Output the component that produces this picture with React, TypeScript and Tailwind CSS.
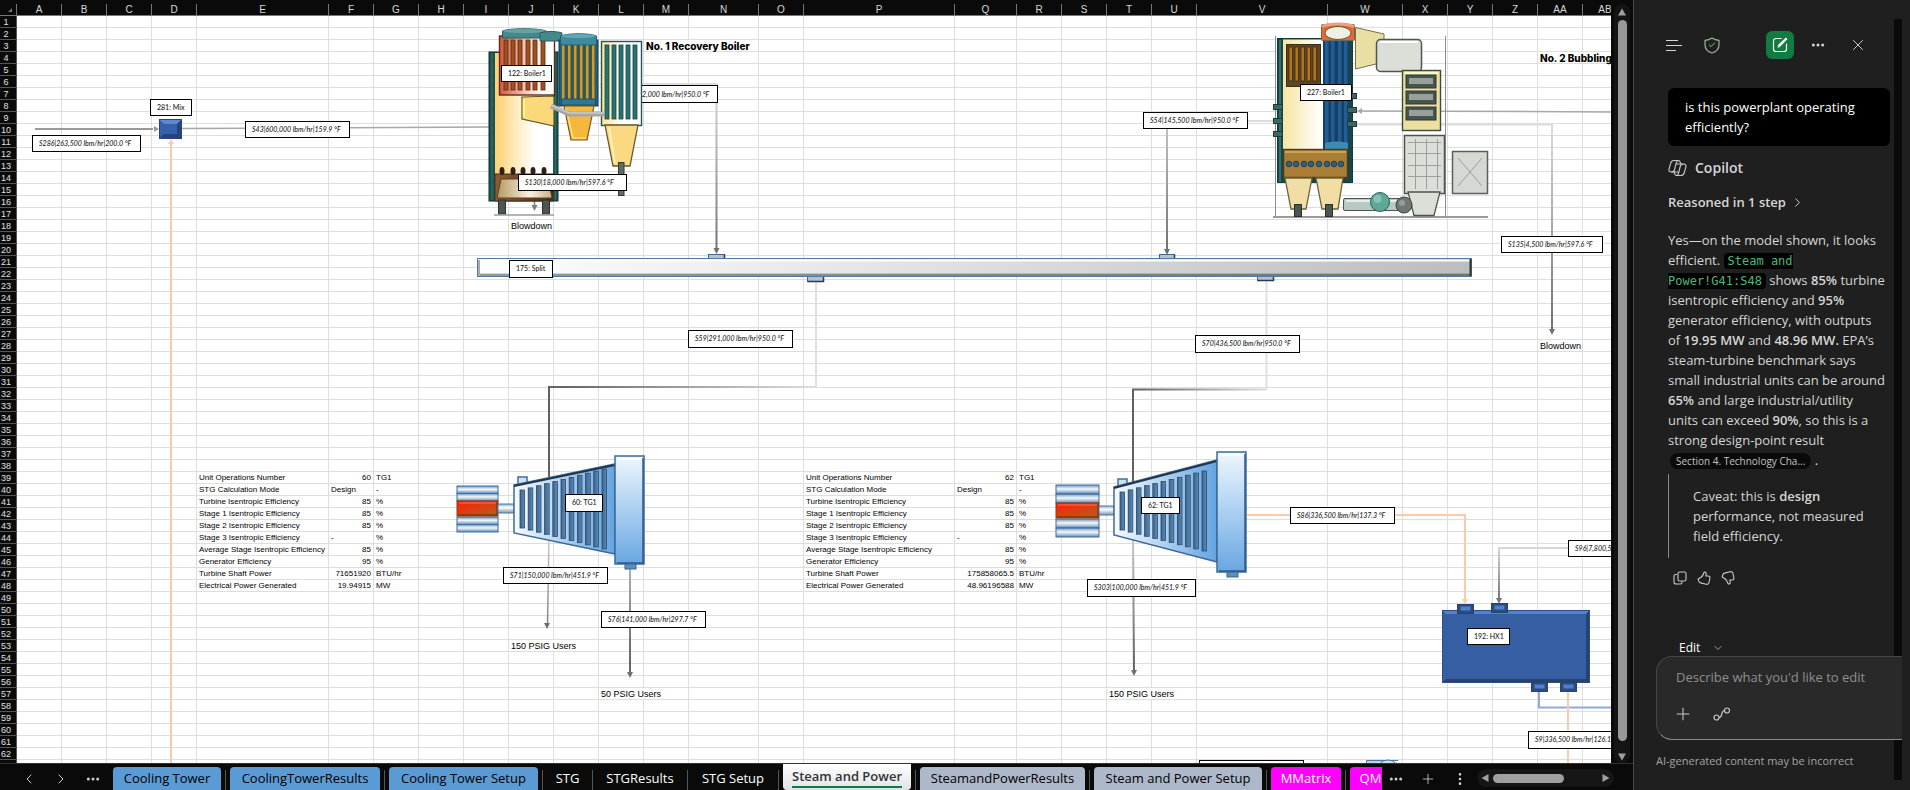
import { Fragment } from "react";
import { Check, ChevronDown, ChevronLeft, ChevronRight, Ellipsis, EllipsisVertical, Plus, X } from "lucide-react";

interface Column {
  name: string;
  width: number;
}

interface Cell {
  text: string;
  span?: number;
  className?: string;
}

interface Label {
  text: string;
  x: number;
  y: number;
  w: number;
  h?: number;
  stream?: boolean;
}

const columns: Column[] = [
  { name: "A", width: 45 },
  { name: "B", width: 45 },
  { name: "C", width: 45 },
  { name: "D", width: 45 },
  { name: "E", width: 132 },
  { name: "F", width: 45 },
  { name: "G", width: 45 },
  { name: "H", width: 45 },
  { name: "I", width: 45 },
  { name: "J", width: 45 },
  { name: "K", width: 45 },
  { name: "L", width: 45 },
  { name: "M", width: 45 },
  { name: "N", width: 70 },
  { name: "O", width: 45 },
  { name: "P", width: 151 },
  { name: "Q", width: 62 },
  { name: "R", width: 45 },
  { name: "S", width: 45 },
  { name: "T", width: 45 },
  { name: "U", width: 45 },
  { name: "V", width: 131 },
  { name: "W", width: 75 },
  { name: "X", width: 45 },
  { name: "Y", width: 45 },
  { name: "Z", width: 45 },
  { name: "AA", width: 45 },
  { name: "AB", width: 45 },
];

const note = "text-[9px]";
const heading = "text-[10px] font-extrabold font-['Inter',sans-serif]";
const right = "text-right";

const cells: Record<string, Cell> = {
  M3: { text: "No. 1 Recovery Boiler", span: 2, className: heading },
  AA4: { text: "No. 2 Bubbling", span: 2, className: heading },
  J18: { text: "Blowdown", className: note },
  AA28: { text: "Blowdown", className: note },
  J53: { text: "150 PSIG Users", span: 2, className: note },
  L57: { text: "50 PSIG Users", span: 2, className: note },
  T57: { text: "150 PSIG Users", span: 2, className: note },
};

// name, first unit, second unit, unit of measure
const results: [string, string, string, string][] = [
  ["Unit Operations Number", "60", "62", "TG1"],
  ["STG Calculation Mode", "Design", "Design", "-"],
  ["Turbine Isentropic Efficiency", "85", "85", "%"],
  ["Stage 1 Isentropic Efficiency", "85", "85", "%"],
  ["Stage 2 Isentropic Efficiency", "85", "85", "%"],
  ["Stage 3 Isentropic Efficiency", "-", "-", "%"],
  ["Average Stage Isentropic Efficiency", "85", "85", "%"],
  ["Generator Efficiency", "95", "95", "%"],
  ["Turbine Shaft Power", "71651920", "175858065.5", "BTU/hr"],
  ["Electrical Power Generated", "19.94915", "48.96196588", "MW"],
];

results.forEach(([name, first, second, unit], i) => {
  const row = 39 + i;
  const align = /^\d/.test(first) ? right : "";
  cells[`E${row}`] = { text: name };
  cells[`F${row}`] = { text: first, className: align };
  cells[`G${row}`] = { text: unit };
  cells[`P${row}`] = { text: name };
  cells[`Q${row}`] = { text: second, className: align };
  cells[`R${row}`] = { text: unit };
});

const labels: Label[] = [
  { text: "281: Mix", x: 150, y: 99, w: 42 },
  { text: "S286|263,500 lbm/hr|200.0 °F", x: 32, y: 135, w: 109, stream: true },
  { text: "S43|600,000 lbm/hr|159.9 °F", x: 245, y: 121, w: 105, stream: true },
  { text: "122: Boiler1", x: 501, y: 65, w: 51 },
  { text: "S130|18,000 lbm/hr|597.6 °F", x: 518, y: 174, w: 109, stream: true },
  { text: "175: Split", x: 509, y: 260, w: 44, h: 18 },
  { text: "S54|145,500 lbm/hr|950.0 °F", x: 1143, y: 112, w: 105, stream: true },
  { text: "227: Boiler1", x: 1300, y: 84, w: 52 },
  { text: "S135|4,500 lbm/hr|597.6 °F", x: 1501, y: 236, w: 102, stream: true },
  { text: "S59|291,000 lbm/hr|950.0 °F", x: 688, y: 330, w: 105, h: 18, stream: true },
  { text: "S70|436,500 lbm/hr|950.0 °F", x: 1195, y: 335, w: 105, h: 18, stream: true },
  { text: "S71|150,000 lbm/hr|451.9 °F", x: 503, y: 567, w: 105, stream: true },
  { text: "S76|141,000 lbm/hr|297.7 °F", x: 601, y: 611, w: 105, stream: true },
  { text: "60: TG1", x: 565, y: 494, w: 38, h: 18 },
  { text: "62: TG1", x: 1141, y: 497, w: 39 },
  { text: "S303|100,000 lbm/hr|451.9 °F", x: 1087, y: 579, w: 109, h: 18, stream: true },
  { text: "S86|336,500 lbm/hr|137.3 °F", x: 1290, y: 507, w: 105, stream: true },
  { text: "S96|7,800,5", x: 1568, y: 540, w: 105, stream: true },
  { text: "192: HX1", x: 1467, y: 628, w: 43 },
  { text: "S9|336,500 lbm/hr|126.1", x: 1528, y: 731, w: 105, h: 18, stream: true },
];

const plain = "bg-transparent text-white";
const blue = "bg-[#5b9bd5] text-black";
const slate = "bg-[#adb9ca] text-black";
const magenta = "bg-[#ff00ff] text-white";

const tabs = [
  { name: "Cooling Tower", className: `w-[108px] ${blue}` },
  { name: "CoolingTowerResults", className: `w-[150px] ${blue}` },
  { name: "Cooling Tower Setup", className: `w-[149px] ${blue}` },
  { name: "STG", className: `w-[41px] ${plain}` },
  { name: "STGResults", className: `w-[86px] ${plain}` },
  { name: "STG Setup", className: `w-[82px] ${plain}` },
  { name: "Steam and Power", className: "w-[128px]", active: true },
  { name: "SteamandPowerResults", className: `w-[165px] ${slate}` },
  { name: "Steam and Power Setup", className: `w-[168px] ${slate}` },
  { name: "MMatrix", className: `w-[70px] ${magenta}` },
  { name: "QM", className: `w-[32px] rounded-r-none pl-[9px] ${magenta}` },
];

function Grid() {
  const rows = Array.from({ length: 63 }, (_, i) => i + 1);

  return (
    <table className="w-[1628px] table-fixed border-separate border-spacing-0 bg-white text-[8px] leading-[10px] text-black">
      <colgroup>
        <col className="w-[17px]" />
        {columns.map((c) => (
          <col key={c.name} style={{ width: c.width }} />
        ))}
      </colgroup>
      <thead>
        <tr className="bg-[#0a0a0a] text-[10px] text-[#d8d8d8]">
          <th className="h-[12px] border-r border-b border-[#777] p-0">
            <svg className="mr-1 ml-auto size-[4px]" viewBox="0 0 4 4">
              <path d="M4 0V4H0Z" fill="#777" />
            </svg>
          </th>
          {columns.map((c) => (
            <th key={c.name} scope="col" className="h-[12px] border-r border-b border-[#777] p-0 pt-px font-normal">
              {c.name}
            </th>
          ))}
        </tr>
      </thead>
      <tbody>
        {rows.map((row) => {
          let skip = 0;
          return (
            <tr key={row}>
              <th
                scope="row"
                className="h-[12px] border-r border-b border-[#555] bg-[#0a0a0a] p-0 pt-px pr-1 text-center text-[9px] font-normal text-[#e0e0e0]"
              >
                {row}
              </th>
              {columns.map((c) => {
                if (skip > 0) {
                  skip--;
                  return null;
                }
                const cell = cells[`${c.name}${row}`];
                skip = (cell?.span ?? 1) - 1;
                return (
                  <td
                    key={c.name}
                    colSpan={cell?.span}
                    className={`h-[12px] border-r border-b border-[#dedede] px-[2px] pt-px pb-0 whitespace-nowrap ${cell?.className ?? ""}`}
                  >
                    {cell?.text}
                  </td>
                );
              })}
            </tr>
          );
        })}
      </tbody>
    </table>
  );
}

function Port({ x, y, w = 16, h = 9 }: { x: number; y: number; w?: number; h?: number }) {
  return (
    <g>
      <rect x={x} y={y} width={w} height={h} fill="#2b4a80" stroke="#25456f" />
      <rect x={x + 3} y={y + 2} width={w - 6} height={h - 5} fill="#4f7fd0" />
    </g>
  );
}

function Nozzle({ x, y, w = 16, h = 5 }: { x: number; y: number; w?: number; h?: number }) {
  return (
    <g>
      <rect x={x} y={y} width={w} height={h} fill="#b4c3d3" stroke="#41668e" />
      <path d={`M${x + w} ${y}v${h}h${-w}`} fill="none" stroke="#26394f" strokeWidth="1.5" />
    </g>
  );
}

interface TurbineProps {
  x: number;
  top: number;
  bottom: number;
  genX: number;
  genW: number;
  coneW: number;
}

// x is where the cone starts, top and bottom are the casing's edges
function Turbine({ x, top, bottom, genX, genW, coneW }: TurbineProps) {
  const mid = (top + bottom) / 2 - 1;
  const wide = (bottom - top) / 2 - 9;
  const slots = Array.from({ length: 11 }, (_, i) => i);
  const half = genW > 42 ? 26 : 23;
  const band = (half - 8) / 2;
  return (
    <g>
      {[mid - half, mid - half + band, mid + 8, mid + 8 + band].map((y) => (
        <rect key={y} x={genX} y={y} width={genW} height={band} fill="url(#genBand)" stroke="#3f6d9c" />
      ))}
      <rect x={genX} y={mid - 8} width={genW} height="15" fill="url(#hot)" stroke="#8b3a12" />
      <path d={`M${genX + 2} ${mid - 6}h${genW - 4}`} stroke="#ff5a3a" strokeWidth="1.5" />
      <path d={`M${genX + genW - 1} ${mid - 7}v13h${2 - genW}`} stroke="#7d3a10" strokeWidth="1.5" />
      <rect x={genX + genW} y={mid - 5} width={x - genX - genW} height="9" fill="url(#pipe)" stroke="#4a78a8" />
      <rect x={x + 4} y={mid - 32} width="9" height="9" fill="#cfe2f5" stroke="#3f6d9c" strokeWidth="1.5" />
      <path
        d={`M${x} ${mid - 24}L${x + coneW} ${mid - wide}V${mid + wide}L${x} ${mid + 24}Z`}
        fill="url(#cone)"
        stroke="#3d6a99"
        strokeWidth="1.5"
      />
      <path d={`M${x} ${mid - 23}L${x + coneW} ${mid - wide + 1}`} stroke="#23364c" strokeWidth="2" />
      {slots.map((i) => {
        const h = 19 + i * 2.1;
        return (
          <rect
            key={i}
            x={x + 6 + i * 8.2}
            y={mid - h}
            width="4.6"
            height={h * 2}
            fill="url(#slot)"
            stroke="#2c4a6b"
            strokeWidth="0.8"
          />
        );
      })}
      <rect x={x + coneW} y={top} width="29" height={bottom - top} fill="url(#casing)" stroke="#3d6a99" strokeWidth="1.5" />
      <path d={`M${x + coneW + 3} ${top + 3}h23`} stroke="#fff" strokeWidth="2" />
      <path d={`M${x + coneW + 28} ${top + 2}v${bottom - top - 3}h-26`} fill="none" stroke="#2f5a8a" strokeWidth="1.5" />
      <rect x={x + coneW + 10} y={bottom} width="11" height="5" fill="#5c8fc0" stroke="#3a6390" />
    </g>
  );
}

function RecoveryBoiler() {
  return (
    <g>
      {/* furnace */}
      <rect x="489" y="52" width="69" height="149" fill="#1d5351" stroke="#10302f" />
      <path d="M492 53V200M555.500 53V200" stroke="#2a6a68" strokeWidth="1.5" />
      <rect x="495" y="53" width="58" height="121" fill="url(#flame)" />
      <rect x="495" y="174" width="58" height="27" fill="url(#ash)" stroke="#4a2c14" />
      <path d="M501 179H548L552 198H497Z" fill="url(#sand)" stroke="#5a4020" />
      {[502, 513, 523, 533, 544].map((x) => (
        <ellipse key={x} cx={x} cy="171" rx="2.5" ry="4" fill="#2f211a" />
      ))}
      <path d="M522 97L554 96V126L522 119Z" fill="#fbd97a" stroke="#5f5423" strokeWidth="1.2" />
      <path d="M524 99V117" stroke="#fff08a" strokeWidth="2.500" />
      {/* superheater */}
      <rect x="499.500" y="36" width="55" height="59" fill="url(#super)" stroke="#5c2a20" strokeWidth="1.4" />
      {[504, 511, 518, 526, 533, 541].map((x) => (
        <rect key={x} x={x} y="40" width="4" height="50" fill="#a1511f" stroke="#5b2b10" strokeWidth="0.8" />
      ))}
      <path d="M502.500 31C508 28 540 28 546 31V38H502.500Z" fill="#44898b" stroke="#2a5c5e" />
      <ellipse cx="524" cy="31" rx="21" ry="2" fill="#66a3a3" />
      <path d="M540 33C545 31 557 31 562 33V41H540Z" fill="#44898b" stroke="#2a5c5e" />
      {/* boiler bank */}
      <rect x="559" y="40" width="39" height="66" fill="#1e6280" stroke="#133f55" />
      <rect x="562" y="44" width="33" height="56" fill="#54532a" />
      {[562, 568, 574, 580, 586, 592].map((x) => (
        <rect key={x} x={x} y="44" width="2.500" height="56" fill="#d39a24" />
      ))}
      {[565, 571, 577, 583, 589].map((x) => (
        <rect key={x} x={x} y="44" width="2" height="56" fill="#1f5a78" />
      ))}
      <path d="M560.500 36C568 33 590 33 596.500 36V45H560.500Z" fill="#408aa0" stroke="#245d70" />
      <ellipse cx="578.500" cy="36" rx="17" ry="2" fill="#62a7b8" />
      <rect x="561.500" y="99" width="34" height="6" fill="#2f7890" stroke="#1c5266" />
      <path d="M564 106H594L587 140H571Z" fill="#f3b83c" stroke="#7b591e" strokeWidth="1.2" />
      <path d="M566 108L573 138H586" fill="none" stroke="#ffe07e" strokeWidth="1.5" />
      {/* precipitator */}
      <rect x="601.500" y="41.500" width="40" height="84" fill="url(#precip)" stroke="#23545a" strokeWidth="1.4" />
      {[605, 612, 619, 626, 633].map((x) => (
        <rect key={x} x={x} y="45" width="4" height="74" fill="#2a7370" stroke="#174746" strokeWidth="0.8" />
      ))}
      <path d="M605 125H638L630 166H613Z" fill="#fad980" stroke="#63582c" strokeWidth="1.3" />
      <path d="M609 127L615 163" stroke="#fff0b4" strokeWidth="2" />
      <rect x="618.500" y="162.500" width="5.500" height="33" fill="#616b63" stroke="#333a35" />
      <path d="M551 106L569 114H604" fill="none" stroke="#a5a5a5" strokeWidth="5" />
      <path d="M551 105L569 113H604" fill="none" stroke="#cdcdcd" strokeWidth="1.5" />
      {/* feet */}
      <rect x="498.500" y="200" width="7" height="14" fill="#4b5552" stroke="#2b3230" />
      <rect x="542.500" y="200" width="7" height="14" fill="#4b5552" stroke="#2b3230" />
      <path d="M494 215H554" stroke="#9a9a9a" strokeWidth="1.5" />
    </g>
  );
}

function BubblingBedBoiler() {
  return (
    <g>
      <path d="M1275.500 36V218M1445.500 36V218" stroke="#8d8d8d" />
      <path d="M1273 217H1488" stroke="#9a9a9a" strokeWidth="2" />
      <rect x="1277.500" y="38.500" width="75" height="144" fill="#1b4648" stroke="#113a3a" />
      <path d="M1280 40V182" stroke="#2f7072" strokeWidth="2" />
      <rect x="1283" y="39.500" width="40" height="110" fill="url(#bed)" />
      <rect x="1323" y="40" width="26" height="108" fill="#163f63" />
      {[1325, 1331, 1338, 1344].map((x) => (
        <rect key={x} x={x} y="41" width="3.500" height="102" fill="#205f96" />
      ))}
      <path d="M1325 143C1332 141 1342 141 1348 143V149H1325Z" fill="#3a8cb2" />
      <rect x="1286.500" y="44.500" width="34" height="42" fill="#5b4726" stroke="#3a2c15" />
      {[1289, 1295, 1301, 1307, 1313].map((x) => (
        <rect key={x} x={x} y="47" width="3.500" height="34" fill="#b5741a" stroke="#3a2a12" strokeWidth="0.8" />
      ))}
      {/* drum and outlet duct */}
      <rect x="1321.500" y="24.500" width="33" height="16" rx="1" fill="#e8672f" stroke="#6d6a5c" />
      <path d="M1322 27C1326 23 1350 23 1354 27" fill="none" stroke="#e8a183" strokeWidth="3" />
      <ellipse cx="1338" cy="33" rx="13" ry="6.500" fill="#eef0e2" stroke="#5a5a44" />
      <path d="M1355.500 27.500L1384 34V62L1355.500 69Z" fill="#e8dfa5" stroke="#77704a" />
      <rect x="1376.500" y="39.500" width="45" height="32" rx="4" fill="#dcdfd8" stroke="#4d5652" strokeWidth="1.500" />
      <path d="M1380 42H1418" stroke="#fff" strokeWidth="2" />
      {/* economizer */}
      <rect x="1402.500" y="70.500" width="38" height="60" fill="#ece0a0" stroke="#3c4a3e" strokeWidth="1.400" />
      <path d="M1405 73H1438" stroke="#fff7c4" strokeWidth="2" />
      {[75, 91, 107].map((y) => (
        <g key={y}>
          <rect x="1406" y={y} width="30" height="13" fill="#47544f" stroke="#2c3633" />
          <rect x="1409" y={y + 3} width="24" height="6" fill="#98a09c" />
        </g>
      ))}
      {/* bed, hoppers */}
      <rect x="1283.500" y="149.500" width="64" height="28" fill="#a97e34" stroke="#4f3a17" strokeWidth="1.400" />
      <path d="M1285 152H1346" stroke="#cfa25a" strokeWidth="2" />
      {[1289, 1296, 1304, 1311, 1319, 1327, 1334, 1341].map((x) => (
        <circle key={x} cx={x} cy="164" r="2.800" fill="#2b6186" stroke="#163247" strokeWidth="0.800" />
      ))}
      <path d="M1285 178H1312L1306 209H1291Z" fill="#f0dea4" stroke="#6d613a" strokeWidth="1.300" />
      <path d="M1316 178H1343L1338 209H1322Z" fill="#f0dea4" stroke="#6d613a" strokeWidth="1.300" />
      <rect x="1294.500" y="204.500" width="7" height="12" fill="#4b5552" stroke="#2b3230" />
      <rect x="1325.500" y="204.500" width="7" height="12" fill="#4b5552" stroke="#2b3230" />
      {[104, 118, 131].map((y) => (
        <rect key={y} x="1273.500" y={y + 0.5} width="9" height="5" fill="#3c6764" stroke="#1c3a38" />
      ))}
      {[93, 107, 121].map((y) => (
        <rect key={y} x="1347.500" y={y + 0.5} width="9" height="5" fill="#3c6764" stroke="#1c3a38" />
      ))}
      {/* air heater and fans */}
      <rect x="1404.500" y="135.500" width="40" height="58" fill="#dcded8" stroke="#4b5552" strokeWidth="1.500" />
      <path
        d="M1415.500 139V189M1426.500 139V189M1437.500 139V189M1408 142.500H1441M1408 153.500H1441M1408 165.500H1441M1408 176.500H1441"
        stroke="#9da19d"
      />
      <path d="M1408 192H1440L1434 215.500H1414Z" fill="#dcded8" stroke="#4b5552" strokeWidth="1.300" />
      <rect x="1343.500" y="198.500" width="62" height="12" rx="1.500" fill="#b9c9c3" stroke="#4b5552" />
      <path d="M1346 201H1402" stroke="#e4eeea" strokeWidth="2" />
      <circle cx="1380" cy="202" r="9.500" fill="#5ea898" stroke="#2f5f56" />
      <circle cx="1377.500" cy="199" r="4" fill="#84c4b6" />
      <circle cx="1404" cy="205" r="8" fill="#6f7773" stroke="#3b423f" />
      <circle cx="1402" cy="203" r="3" fill="#959c99" />
      <rect x="1452.500" y="151.500" width="35" height="42" fill="#d6d9d3" stroke="#5a615d" strokeWidth="1.500" />
      <path d="M1458 158L1482 186M1482 158L1458 186" stroke="#9a9f9b" />
    </g>
  );
}

function Diagram() {
  return (
    <svg className="absolute top-0 left-0 h-[790px] w-[1700px]" viewBox="0 0 1700 790" fill="none" aria-hidden="true">
      <defs>
        <linearGradient id="flame">
          <stop offset="0" stopColor="#ffcf70" />
          <stop offset="0.35" stopColor="#ffebbd" />
          <stop offset="0.7" stopColor="#fff" />
        </linearGradient>
        <linearGradient id="super">
          <stop offset="0" stopColor="#d2593c" />
          <stop offset="0.5" stopColor="#f8cdbf" />
          <stop offset="0.8" stopColor="#fff" />
        </linearGradient>
        <linearGradient id="ash">
          <stop offset="0" stopColor="#8f5c30" />
          <stop offset="1" stopColor="#4a2a14" />
        </linearGradient>
        <linearGradient id="sand">
          <stop offset="0" stopColor="#b79a62" />
          <stop offset="0.6" stopColor="#f7f0e2" />
          <stop offset="1" stopColor="#c9b183" />
        </linearGradient>
        <linearGradient id="precip">
          <stop offset="0" stopColor="#fbe58f" />
          <stop offset="0.5" stopColor="#fff" />
        </linearGradient>
        <linearGradient id="bed">
          <stop offset="0" stopColor="#f6e5a2" />
          <stop offset="0.9" stopColor="#fffef8" />
        </linearGradient>
        <linearGradient id="bar">
          <stop offset="0" stopColor="#fff" />
          <stop offset="1" stopColor="#bdbdbd" />
        </linearGradient>
        <linearGradient id="genBand" x2="0" y2="1">
          <stop offset="0" stopColor="#6d9ac6" />
          <stop offset="0.45" stopColor="#f4f8fc" />
          <stop offset="1" stopColor="#5f8ab5" />
        </linearGradient>
        <linearGradient id="hot" x2="1" y2="1">
          <stop offset="0" stopColor="#ff1f08" />
          <stop offset="1" stopColor="#b5601c" />
        </linearGradient>
        <linearGradient id="pipe" x2="0" y2="1">
          <stop offset="0" stopColor="#8db4dc" />
          <stop offset="0.4" stopColor="#fff" />
          <stop offset="1" stopColor="#7c93ad" />
        </linearGradient>
        <linearGradient id="cone">
          <stop offset="0" stopColor="#f6fbff" />
          <stop offset="1" stopColor="#64a4e0" />
        </linearGradient>
        <linearGradient id="slot">
          <stop offset="0" stopColor="#3b628b" />
          <stop offset="1" stopColor="#5f8db9" />
        </linearGradient>
        <linearGradient id="casing" x2="0" y2="1">
          <stop offset="0" stopColor="#eef7ff" />
          <stop offset="1" stopColor="#68a7e2" />
        </linearGradient>
        <linearGradient id="down" gradientUnits="userSpaceOnUse" x1="0" y1="84" x2="0" y2="254">
          <stop offset="0" stopColor="#dcdcdc" />
          <stop offset="1" stopColor="#707070" />
        </linearGradient>
        <linearGradient id="downLong" gradientUnits="userSpaceOnUse" x1="0" y1="124" x2="0" y2="330">
          <stop offset="0" stopColor="#dcdcdc" />
          <stop offset="1" stopColor="#707070" />
        </linearGradient>
        <linearGradient id="left1" gradientUnits="userSpaceOnUse" x1="549" y1="0" x2="816" y2="0">
          <stop offset="0" stopColor="#606060" />
          <stop offset="1" stopColor="#dedede" />
        </linearGradient>
        <linearGradient id="left2" gradientUnits="userSpaceOnUse" x1="1133" y1="0" x2="1267" y2="0">
          <stop offset="0" stopColor="#606060" />
          <stop offset="1" stopColor="#dedede" />
        </linearGradient>
        <linearGradient id="exhaust" gradientUnits="userSpaceOnUse" x1="0" y1="530" x2="0" y2="660">
          <stop offset="0" stopColor="#d0d0d0" />
          <stop offset="1" stopColor="#666" />
        </linearGradient>
        <linearGradient id="feed" gradientUnits="userSpaceOnUse" x1="0" y1="547" x2="0" y2="600">
          <stop offset="0" stopColor="#d6d6d6" />
          <stop offset="1" stopColor="#777" />
        </linearGradient>
      </defs>

      {/* streams */}
      <path d="M35 129H153" stroke="#9a9a9a" strokeWidth="2" />
      <path d="M154 126L159 129L154 132Z" fill="#9a9a9a" />
      <path d="M182 128.500L490 127" stroke="#a8a8a8" strokeWidth="1.500" />
      <path d="M171 764V144" stroke="#f8cbad" strokeWidth="2" />
      <path d="M168 144L171 139L174 144Z" fill="#f8cbad" />
      <path d="M600 84H717" stroke="#dcdcdc" strokeWidth="2" />
      <path d="M716.500 83V249" stroke="url(#down)" strokeWidth="2" />
      <path d="M713.500 248H719.500L716.500 254Z" fill="#707070" />
      <path d="M534.500 200V206" stroke="#808080" strokeWidth="1.500" />
      <path d="M531.500 205H537.500L534.500 211Z" fill="#808080" />
      <path d="M1248 121H1276" stroke="#dcdcdc" strokeWidth="2" />
      <path d="M1167 121V249" stroke="url(#down)" strokeWidth="2" />
      <path d="M1164 249H1170L1167 255Z" fill="#707070" />
      <path d="M1362 111L1640 112" stroke="#a8a8a8" strokeWidth="1.500" />
      <path d="M1362 108V114L1357 111Z" fill="#a8a8a8" />
      <path d="M1357 124.500H1552" stroke="#dcdcdc" strokeWidth="2" />
      <path d="M1552 124V330" stroke="url(#downLong)" strokeWidth="2" />
      <path d="M1549 329H1555L1552 335Z" fill="#707070" />
      <path d="M816 281V388" stroke="#e0e0e0" strokeWidth="2" />
      <path d="M816 387H549V480" stroke="url(#left1)" strokeWidth="2" />
      <path d="M1266.500 281V390" stroke="#e0e0e0" strokeWidth="2" />
      <path d="M1266 389.500H1133V485" stroke="url(#left2)" strokeWidth="2" />
      <path d="M549 535L547.500 625" stroke="url(#exhaust)" strokeWidth="1.500" />
      <path d="M544 623H550L547 629Z" fill="#707070" />
      <path d="M630 569V674" stroke="url(#exhaust)" strokeWidth="2" />
      <path d="M627 672H633L630 678Z" fill="#707070" />
      <path d="M1133 535L1134 672" stroke="url(#exhaust)" strokeWidth="2" />
      <path d="M1131 670H1137L1134 676Z" fill="#707070" />
      <path d="M1247 515H1465V600" stroke="#f8cbad" strokeWidth="2" />
      <path d="M1462 599H1468L1465 604Z" fill="#f8cbad" />
      <path d="M1568 548H1498" stroke="#d6d6d6" strokeWidth="2" />
      <path d="M1499 548V599" stroke="url(#feed)" strokeWidth="2" />
      <path d="M1496 598H1502L1499 604Z" fill="#777" />
      <path d="M1539 692V707.500H1640" stroke="#8faadc" strokeWidth="2" />
      <path d="M1568 692V764" stroke="#f8cbad" strokeWidth="2" />

      {/* mixer */}
      <rect x="159.500" y="119.500" width="22" height="19" fill="#3560ab" stroke="#28487c" />
      <path d="M160 120H181L177 124H164Z" fill="#5c88d8" />
      <path d="M181 120V138H160L164 134H177V124Z" fill="#274479" />

      {/* steam header */}
      <Nozzle x={708.5} y={254.5} />
      <Nozzle x={1159.5} y={254.5} w={15} />
      <Nozzle x={807.5} y={276.5} />
      <Nozzle x={1257.5} y={275.5} />
      <rect x="477.500" y="258.500" width="994" height="18" fill="url(#bar)" stroke="#4f7ba5" />
      <path d="M479 260.500H1470" stroke="#fff" strokeWidth="2" />
      <path d="M480 273.500H1470" stroke="#000" strokeOpacity="0.15" />
      <path d="M479 275H1470" stroke="#000" strokeOpacity="0.4" strokeWidth="2" />
      <path d="M479 260V276" stroke="#aaa" strokeWidth="2" />
      <path d="M1470.500 259V276" stroke="#333" strokeWidth="2" />

      {/* stream tag that runs behind the boiler */}
      <rect x="612.500" y="85.500" width="105" height="17" fill="#fff" stroke="#000" />

      <RecoveryBoiler />
      <BubblingBedBoiler />
      <Turbine x={514} top={456} bottom={564} genX={457} genW={41} coneW={101} />
      <Turbine x={1114} top={452} bottom={572} genX={1056} genW={43} coneW={103} />

      {/* heat exchanger */}
      <rect x="1442.500" y="610.500" width="147" height="72" fill="#355ea3" stroke="#2c4f80" />
      <path d="M1443 611H1589L1586 614H1446Z" fill="#5482d0" />
      <path d="M1589 611V682H1443L1446 679H1586V614Z" fill="#26436f" />
      <Port x={1457.5} y={604.5} />
      <Port x={1491.5} y={603.5} />
      <Port x={1531.5} y={682.5} />
      <Port x={1560.5} y={682.5} />

      {/* next unit, just below the fold */}
      <rect x="1199.500" y="760.500" width="104" height="17" fill="#fff" stroke="#000" />
      <path d="M1366.500 764V760.500H1398" fill="#b8d3ec" stroke="#4a78a8" />
      <circle cx="1388" cy="771" r="11" fill="#cfe2f3" stroke="#4a78a8" />
    </svg>
  );
}

function Workbook() {
  return (
    <section className="relative min-w-0 flex-1 overflow-hidden bg-[#0a0a0a] pt-1 font-['Liberation_Sans',Arial,sans-serif]">
      <Grid />
      <Diagram />
      <span className="absolute top-[89px] left-[642px] font-['Lato',sans-serif] text-[7px] leading-[10px] font-medium whitespace-nowrap text-[#222] italic">
        2,000 lbm/hr|950.0 °F
      </span>
      {labels.map((l) => (
        <div
          key={l.text}
          className={`absolute border border-black bg-white pt-[2px] pl-[6px] font-['Lato',sans-serif] text-[7px] leading-[10px] font-medium whitespace-nowrap text-[#222] ${l.stream ? "italic" : ""}`}
          style={{ left: l.x, top: l.y, width: l.w, height: l.h ?? 17 }}
        >
          {l.text}
        </div>
      ))}
    </section>
  );
}

function Triangle({ className = "" }: { className?: string }) {
  return (
    <svg className={`size-[8px] ${className}`} viewBox="0 0 8 8" fill="#a0a0a0">
      <path d="M4 0.500L8 7.500H0Z" />
    </svg>
  );
}

function VerticalScroll() {
  return (
    <div className="flex w-[22px] shrink-0 flex-col items-center bg-[#0a0a0a] pt-1">
      <div className="flex w-[16px] flex-1 flex-col items-center rounded-lg bg-[#141414] pt-1">
        <Triangle />
        <div className="mt-1 w-[9px] flex-1 rounded-full bg-[#999]" />
        <Triangle className="mt-3 mb-[2px] rotate-180" />
      </div>
    </div>
  );
}

function SheetTabs() {
  return (
    <footer className="flex h-[27px] shrink-0 items-stretch overflow-hidden border-t border-[#333] bg-[#0a0a0a] text-[#d0d0d0]">
      <div className="flex w-[113px] shrink-0 items-center pt-1 pl-[21px]">
        <button aria-label="Previous sheet" className="w-8">
          <ChevronLeft size={16} strokeWidth={1.5} />
        </button>
        <button aria-label="Next sheet" className="w-8">
          <ChevronRight size={16} strokeWidth={1.5} />
        </button>
        <button aria-label="All sheets">
          <Ellipsis size={16} strokeWidth={2.5} />
        </button>
      </div>
      <nav className="flex shrink-0 items-stretch text-[13px]">
        {tabs.map((t, i) => (
          <Fragment key={t.name}>
            {i > 0 && <span className="mx-1 mt-[6px] w-px bg-[#555]" />}
            {t.active ? (
              <button
                className={`flex flex-col items-center rounded-b-sm bg-linear-to-b from-white to-[#dfe3e8] leading-[24px] font-semibold text-[#333] ${t.className}`}
              >
                <span className="h-[24px] border-b-2 border-[#107c41] whitespace-nowrap">{t.name}</span>
              </button>
            ) : (
              <button className={`mt-[3px] rounded-t text-center leading-[23px] whitespace-nowrap ${t.className}`}>{t.name}</button>
            )}
          </Fragment>
        ))}
      </nav>
      <div className="flex flex-1 items-center gap-4 pt-1 pl-[6px]">
        <button aria-label="More sheets">
          <Ellipsis size={16} strokeWidth={2.5} />
        </button>
        <button aria-label="New sheet">
          <Plus size={16} strokeWidth={1.25} />
        </button>
        <button aria-label="Options">
          <EllipsisVertical size={16} strokeWidth={2} />
        </button>
      </div>
      <div className="mt-[5px] mr-[19px] flex h-[18px] w-[137px] shrink-0 items-center rounded-full bg-[#161616] px-1">
        <Triangle className="-rotate-90" />
        <div className="ml-1 h-[9px] w-[71px] rounded-full bg-[#a0a0a0]" />
        <Triangle className="ml-auto rotate-90" />
      </div>
    </footer>
  );
}

function CopilotIcon() {
  return (
    <svg className="h-[18px] w-[19px]" viewBox="0 0 19 18" fill="none" stroke="#c8c8c8" strokeWidth="1.1" strokeLinejoin="round">
      <path d="M5.800 1.500H10.300C11.500 1.500 12 2.400 12.300 3.500L12.700 5H15.500C17.500 5 18.300 6.200 17.900 7.800L16.300 13.500C15.800 15.500 14.700 16.500 13 16.500H8.500C7.500 16.500 6.900 15.700 6.600 14.500L6.200 13H3.300C1.400 13 0.600 11.800 1 10.200L2.600 4.500C3.100 2.500 4.200 1.500 5.800 1.500Z" />
      <path d="M10.500 1.500C9.200 1.500 8.600 2.600 8.300 3.700L6.600 10.500C6.200 12 5.400 13 3.500 13M8.300 16.500C9.600 16.500 10.200 15.400 10.500 14.300L12.200 7.500C12.600 6 13.400 5 15.300 5M8 5H12.700M6.200 13H10.800" />
    </svg>
  );
}

function CopilotPanel() {
  return (
    <aside className="flex w-[277px] shrink-0 border-l border-[#4a4a4a] bg-[#1f1f1f] font-['Open_Sans','Noto_Sans',sans-serif] text-[13px] leading-5 text-[#d6d6d6]">
      <div className="flex w-[268px] flex-col overflow-hidden">
        <div className="flex flex-1">
          <div className="flex min-w-0 flex-1 flex-col pr-1 pl-[34px]">
            <header className="flex h-[88px] shrink-0 items-center pt-[2px]">
              <button aria-label="Conversations" className="-ml-[2px]">
                <svg width="16" height="13" viewBox="0 0 16 13" stroke="#d6d6d6" strokeWidth="1.1">
                  <path d="M0 1.500H12M0 6.500H16M0 11.500H10" />
                </svg>
              </button>
              <button aria-label="Protected" className="relative ml-[22px]">
                <svg width="16" height="17" viewBox="0 0 16 17" fill="none" stroke="#8fc08a" strokeWidth="1.2" strokeLinejoin="round">
                  <path d="M8 1C10 2.500 12.300 3.200 15 3.300V8C15 12 12 14.700 8 16C4 14.700 1 12 1 8V3.300C3.700 3.200 6 2.500 8 1Z" />
                </svg>
                <Check className="absolute top-1 left-1" size={8} color="#8fc08a" strokeWidth={3} />
              </button>
              <button aria-label="New chat" className="ml-[46px] flex size-7 items-center justify-center rounded-md bg-[#107c41]">
                <svg width="16" height="16" viewBox="0 0 16 16" fill="none" stroke="#fff" strokeWidth="1.2" strokeLinecap="round">
                  <path d="M9 1.500H4C2.600 1.500 1.500 2.600 1.500 4V12C1.500 13.400 2.600 14.500 4 14.500H12C13.400 14.500 14.500 13.400 14.500 12V7" />
                  <path d="M6 10L6.500 7.800L14 0.800L15.200 2L8 9.500Z" fill="#fff" strokeWidth="0.6" />
                </svg>
              </button>
              <button aria-label="More" className="ml-4">
                <Ellipsis size={16} strokeWidth={2.5} />
              </button>
              <button aria-label="Close" className="ml-[23px]">
                <X size={18} strokeWidth={1.25} />
              </button>
            </header>

            <p className="rounded-md bg-black py-[9px] pl-[17px] text-white">is this powerplant operating efficiently?</p>

            <h2 className="mt-3 flex items-center gap-2 text-[14px] font-semibold">
              <CopilotIcon />
              Copilot
            </h2>
            <button className="mt-[14px] flex items-center gap-1 font-semibold">
              Reasoned in 1 step
              <ChevronRight size={15} strokeWidth={1.5} />
            </button>

            <p className="mt-[18px]">
              Yes—on the model shown, it looks efficient.{" "}
              <code className="rounded bg-black px-1 py-px font-['DejaVu_Sans_Mono',monospace] text-[12px] leading-4 text-[#4cb878]">
                Steam and Power!G41:S48
              </code>{" "}
              shows <b className="font-semibold">85%</b> turbine isentropic efficiency and <b className="font-semibold">95%</b> generator
              efficiency, with outputs of&nbsp;<b className="font-semibold">19.95&nbsp;MW</b> and{" "}
              <b className="font-semibold">48.96 MW.</b> EPA’s steam-turbine benchmark says small industrial units can be around{" "}
              <b className="font-semibold">65%</b> and large industrial/utility units&nbsp;can exceed <b className="font-semibold">90%</b>, so
              this is a strong design-point result{" "}
              <a href="#source" className="ml-[2px] inline-block rounded-full bg-[#0a0a0a] px-[6px] text-[10px] leading-4 text-[#c4c4c4]">
                Section 4. Technology Cha...
              </a>{" "}
              .
            </p>
            <blockquote className="mt-1 border-l border-[#8a8a8a] py-3 pl-6">
              Caveat: this is <b className="font-semibold">design</b> performance, not measured field efficiency.
            </blockquote>

            <div className="mt-[13px] flex gap-[10px] pl-[5px]">
              <button aria-label="Copy">
                <svg width="14" height="14" viewBox="0 0 14 14" fill="none" stroke="#c8c8c8" strokeWidth="1.1">
                  <rect x="5" y="1" width="8" height="9" rx="1.5" />
                  <path d="M4 3.500H2.500C1.600 3.500 1 4 1 5V11C1 12.300 1.700 13 3 13H7.500C8.500 13 9 12.500 9 11.500V10.500" />
                </svg>
              </button>
              <button aria-label="Good response">
                <svg width="14" height="14" viewBox="0 0 14 14" fill="none" stroke="#c8c8c8" strokeWidth="1.1" strokeLinejoin="round">
                  <path d="M7.500 1C8.800 0.800 9.300 1.700 9.200 2.800L8.800 5H11.300C12.500 5 13.100 5.900 12.900 7L12 11.500C11.700 12.900 10.500 13.600 9.200 13.300L3.500 11.900C2.600 11.700 2.200 11.200 1.900 10.400L1.300 8.800C1.100 8.200 1.300 7.800 1.800 7.500L4 6.200C5.500 5 6.500 3.500 7 1.500Z" />
                </svg>
              </button>
              <button aria-label="Bad response">
                <svg width="14" height="14" viewBox="0 0 14 14" fill="none" stroke="#c8c8c8" strokeWidth="1.1" strokeLinejoin="round">
                  <path d="M7.500 13C8.800 13.200 9.300 12.300 9.200 11.200L8.800 9H11.300C12.500 9 13.100 8.100 12.900 7L12 2.500C11.700 1.100 10.500 0.400 9.200 0.700L3.500 2.100C2.600 2.300 2.200 2.800 1.900 3.600L1.300 5.200C1.100 5.800 1.300 6.200 1.800 6.500L4 7.800C5.500 9 6.500 10.500 7 12.500Z" />
                </svg>
              </button>
            </div>

            <button className="mt-auto ml-[11px] flex items-center gap-3 text-[12px] leading-4 font-medium text-white">
              Edit
              <ChevronDown size={12} strokeWidth={1.5} color="#c8c8c8" />
            </button>
          </div>
          <div className="mt-[19px] w-2 bg-[#0a0a0a]" />
        </div>

        <form className="-mr-4 ml-[22px] h-[84px] shrink-0 rounded-2xl border border-[#474747] border-b-[#8a8a8a] bg-[#292929] pt-[10px] pl-[19px]">
          <input
            aria-label="Message"
            placeholder="Describe what you'd like to edit"
            className="w-full bg-transparent text-[13px] leading-5 outline-none placeholder:text-[#8f8f8f]"
          />
          <div className="mt-[17px] flex items-center gap-5">
            <button type="button" aria-label="Add">
              <Plus size={20} strokeWidth={1.25} className="-ml-[3px]" color="#c8c8c8" />
            </button>
            <button type="button" aria-label="Agents">
              <svg width="18" height="14" viewBox="0 0 18 14" fill="none" stroke="#c8c8c8" strokeWidth="1.2">
                <circle cx="3.500" cy="10.500" r="2.500" />
                <circle cx="14" cy="3.500" r="2.500" />
                <path d="M6 10.500C10 11 7.500 3.500 11.500 3.500" />
              </svg>
            </button>
          </div>
        </form>
        <div className="flex h-[50px] shrink-0">
          <p className="min-w-0 flex-1 pt-[11px] pl-[22px] text-[11px] text-[#a3a3a3]">AI-generated content may be incorrect</p>
          <div className="h-10 w-2 bg-[#0a0a0a]" />
        </div>
      </div>
    </aside>
  );
}

export default function App() {
  return (
    <div className="flex h-screen overflow-hidden bg-[#0a0a0a] font-['Open_Sans','Noto_Sans',sans-serif]">
      <main className="flex min-w-0 flex-1 flex-col">
        <div className="flex min-h-0 flex-1">
          <Workbook />
          <VerticalScroll />
        </div>
        <SheetTabs />
      </main>
      <CopilotPanel />
    </div>
  );
}
